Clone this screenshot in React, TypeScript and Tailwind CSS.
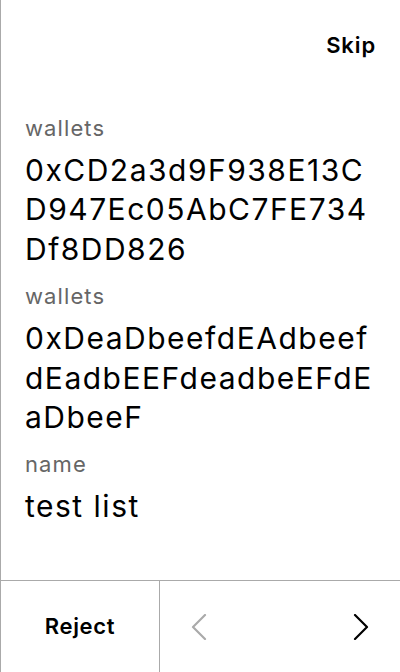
import React from "react";

function Chevron({ dir, color }: { dir: "left" | "right"; color: string }) {
  const pts = dir === "left" ? "14,1 2,13 14,25" : "2,1 14,13 2,25";
  return (
    <svg width="16" height="26" viewBox="0 0 16 26" fill="none">
      <polyline points={pts} stroke={color} strokeWidth="2.2" strokeLinecap="round" strokeLinejoin="round" />
    </svg>
  );
}

function Field({ label, value }: { label: string; value: string }) {
  return (
    <div className="flex flex-col">
      <div className="text-[22px] leading-[28px] tracking-[0.05em] text-[#666666] mb-[9px]">{label}</div>
      <div className="text-[30px] leading-[39.4px] tracking-[0.05em] text-black break-all">{value}</div>
    </div>
  );
}

export default function App() {
  return (
    <div
      className="w-[400px] h-[672px] bg-white border-l border-[#aaaaaa] flex flex-col"
      style={{ fontFamily: "Inter, 'Noto Sans', sans-serif" }}
    >
      <div className="flex justify-end px-6 pt-[31px]">
        <span className="text-[22px] leading-[28px] tracking-[0.04em] font-semibold text-black">Skip</span>
      </div>
      <div className="flex-1 flex flex-col gap-[13px] px-6 pt-[55px]">
        <Field label="wallets" value="0xCD2a3d9F938E13CD947Ec05AbC7FE734Df8DD826" />
        <Field label="wallets" value="0xDeaDbeefdEAdbeefdEadbEEFdeadbeEFdEaDbeeF" />
        <Field label="name" value="test list" />
      </div>
      <div className="h-[92px] border-t border-[#aaaaaa] flex">
        <div className="w-[159px] border-r border-[#aaaaaa] flex items-center justify-center">
          <span className="text-[22px] tracking-[0.03em] font-semibold text-black">Reject</span>
        </div>
        <div className="flex-1 flex items-center justify-between px-[31px]">
          <Chevron dir="left" color="#aaaaaa" />
          <Chevron dir="right" color="#000000" />
        </div>
      </div>
    </div>
  );
}
